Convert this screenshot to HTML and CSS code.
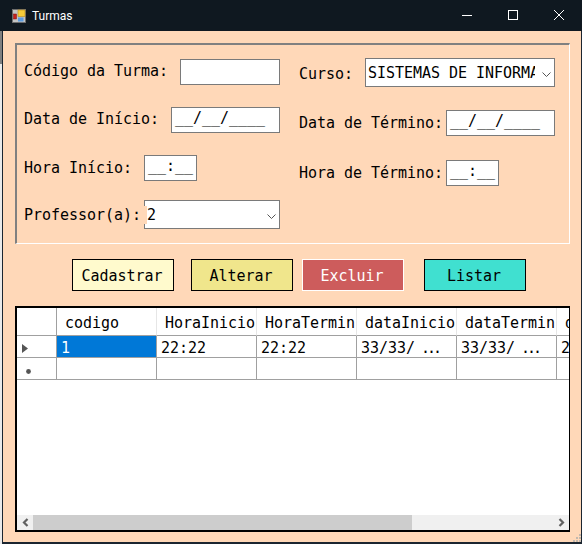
FILE: index.html
```html
<!DOCTYPE html>
<html>
<head>
  <title>Turmas</title>
  <link rel="stylesheet" href="styles.css">
</head>
<body>

  <div class="window">
    <div class="title-bar">
      <svg class="app-icon" width="14" height="14" viewBox="0 0 14 14">
        <rect x="0.5" y="0.5" width="13" height="13" fill="#c4c4c4" stroke="#6e6e6e"/>
        <rect x="1.5" y="5" width="3" height="5" fill="#c8201c" stroke="#7a1010" stroke-width="0.5"/>
        <rect x="6" y="1" width="7" height="6.5" fill="#f6cc3a" stroke="#b88a18" stroke-width="0.6"/>
        <rect x="6" y="8.5" width="5.5" height="4" fill="#5b9be0"/>
      </svg>
      <span class="title-text">Turmas</span>
      <div class="win-controls">
        <svg class="win-btn" width="10" height="10" viewBox="0 0 10 10"><path d="M0 5.5H10" stroke="#fff" fill="none"/></svg>
        <svg class="win-btn" width="10" height="10" viewBox="0 0 10 10"><rect x="0.5" y="0.5" width="9" height="9" stroke="#fff" fill="none"/></svg>
        <svg class="win-btn" width="10" height="10" viewBox="0 0 10 10"><path d="M0 0L10 10M10 0L0 10" stroke="#fff" fill="none"/></svg>
      </div>
    </div>

    <div class="content">
      <div class="panel">
        <div class="col col-left">
          <div class="field field-codigo">
            <label class="lift">Código da Turma:</label>
            <div class="input w-100"></div>
          </div>
          <div class="field field-inicio">
            <label class="lift">Data de Início:</label>
            <div class="input w-109">__/__/____</div>
          </div>
          <div class="field field-hora">
            <label>Hora Início:</label>
            <div class="input w-53">__:__</div>
          </div>
          <div class="field field-prof tight">
            <label class="prof-label">Professor(a):</label>
            <div class="select w-136">
              <span class="select-text">2</span>
              <svg class="chevron" width="9" height="5" viewBox="0 0 9 5"><path d="M0.5 0.5L4.5 4.5L8.5 0.5" stroke="#555" fill="none"/></svg>
            </div>
          </div>
        </div>
        <div class="col col-right">
          <div class="field field-curso">
            <label class="drop">Curso:</label>
            <div class="select w-190">
              <span class="select-text">SISTEMAS DE INFORMAÇÃO</span>
              <svg class="chevron" width="9" height="5" viewBox="0 0 9 5"><path d="M0.5 0.5L4.5 4.5L8.5 0.5" stroke="#555" fill="none"/></svg>
            </div>
          </div>
          <div class="field field-termino tight">
            <label>Data de Término:</label>
            <div class="input w-109">__/__/____</div>
          </div>
          <div class="field field-hora-t tight">
            <label>Hora de Término:</label>
            <div class="input w-53">__:__</div>
          </div>
        </div>
      </div>

      <div class="buttons">
        <button class="btn btn-cadastrar">Cadastrar</button>
        <button class="btn btn-alterar">Alterar</button>
        <button class="btn btn-excluir">Excluir</button>
        <button class="btn btn-listar">Listar</button>
      </div>

      <div class="grid">
        <div class="grid-body">
          <table>
            <colgroup>
              <col class="col-head">
              <col class="col-data"><col class="col-data"><col class="col-data"><col class="col-data"><col class="col-data"><col class="col-data">
            </colgroup>
            <thead>
              <tr>
                <th></th>
                <th>codigo</th>
                <th>HoraInicio</th>
                <th>HoraTermin</th>
                <th>dataInicio</th>
                <th>dataTermin</th>
                <th>d</th>
              </tr>
            </thead>
            <tbody>
              <tr class="row-one">
                <td class="row-head"><svg width="6" height="9" viewBox="0 0 6 9"><path d="M0 0L6 4.5L0 9Z" fill="#555"/></svg></td>
                <td class="selected">1</td>
                <td>22:22</td>
                <td>22:22</td>
                <td>33/33/<span class="dots"> ...</span></td>
                <td>33/33/<span class="dots"> ...</span></td>
                <td>2</td>
              </tr>
              <tr class="row-new">
                <td class="row-head"><svg class="star" width="5" height="5" viewBox="0 0 5 5"><circle cx="2.5" cy="2.5" r="2.4" fill="#555"/></svg></td>
                <td></td><td></td><td></td><td></td><td></td><td></td>
              </tr>
            </tbody>
          </table>
        </div>
        <div class="scrollbar">
          <div class="arrow"><svg width="7" height="9" viewBox="0 0 7 9"><path d="M5.5 1L2 4.5L5.5 8" stroke="#606060" stroke-width="2.2" fill="none"/></svg></div>
          <div class="thumb"></div>
          <div class="arrow arrow-right"><svg width="7" height="9" viewBox="0 0 7 9"><path d="M1.5 1L5 4.5L1.5 8" stroke="#606060" stroke-width="2.2" fill="none"/></svg></div>
        </div>
      </div>
    </div>

    <svg class="grip" width="8" height="8" viewBox="0 0 8 8">
      <path d="M6 0h2v2h-2zM3 3h2v2h-2zM6 3h2v2h-2zM0 6h2v2h-2zM3 6h2v2h-2zM6 6h2v2h-2z" fill="#c2b8ae"/>
    </svg>
  </div>

</body>
</html>
```

FILE: styles.css
```css
html, body {
  margin: 0;
  height: 100%;
}
body {
  overflow: hidden;
  background: linear-gradient(#808080 64px, #eaeaea 64px) no-repeat 0 0 / 2px 100%, #fff;
}
.window {
  width: 580px;
  height: 544px;
  margin-left: 2px;
  box-sizing: border-box;
  background: #ffd8b8;
  border: solid #1b2530;
  border-width: 0 1px 2px 1px;
  font-family: "DejaVu Sans Mono", monospace;
  font-size: 15px;
  letter-spacing: -0.03px;
  color: #000;
  display: flex;
  flex-direction: column;
  position: relative;
}
.title-bar {
  height: 31px;
  flex: none;
  margin: 0 -1px 0 -3px;
  background: #0f1820;
  color: #fff;
  display: flex;
  align-items: center;
  padding-left: 12px;
  font-family: Roboto, sans-serif;
  font-size: 12px;
  letter-spacing: 0;
}
.title-text {
  margin-left: 6px;
}
.win-controls {
  margin: 0 0 1px auto;
  display: flex;
  gap: 36px;
  padding-right: 18px;
}
.content {
  padding: 12px 0 0 12px;
}
.panel {
  width: 555px;
  height: 201px;
  box-sizing: border-box;
  border: 2px solid #808080;
  border-right: 1px solid #fff;
  border-bottom: 1px solid #fff;
  display: flex;
}
.col-left {
  width: 282px;
  padding: 14px 0 0 7px;
  box-sizing: border-box;
}
.col-right {
  flex: 1;
  padding: 13px 0 0 0;
}
.field {
  display: flex;
  align-items: center;
  gap: 12px;
  margin-bottom: 22px;
}
.field.tight {
  gap: 3px;
}
.field-hora {
  margin-bottom: 19px;
}
.field-curso {
  margin-bottom: 23px;
}
.field-termino {
  margin-bottom: 24px;
}
.lift {
  padding-bottom: 2px;
}
.drop {
  padding-top: 2px;
}
/* the label box sits over the left edge of the combo */
.prof-label {
  position: relative;
  z-index: 1;
  background: #ffd8b8;
  padding-right: 6px;
  margin-right: -6px;
}
.input, .select {
  box-sizing: border-box;
  background: #fff;
  border: 1px solid #7a7a7a;
  flex: none;
}
.input {
  height: 26px;
  line-height: 20px;
  padding-left: 3px;
  white-space: pre;
}
.select {
  height: 29px;
  line-height: 27px;
  padding: 2px 0 0 2px;
  display: flex;
  align-items: center;
  position: relative;
}
.select-text {
  display: block;
  overflow: hidden;
  white-space: nowrap;
  width: calc(100% - 19px);
}
.chevron {
  position: absolute;
  right: 3px;
  top: 13px;
}
.w-53 { width: 53px; }
.w-100 { width: 100px; }
.w-109 { width: 109px; }
.w-136 { width: 136px; }
.w-190 { width: 190px; }

.buttons {
  display: flex;
  padding: 15px 0 0 57px;
}
.btn {
  width: 102px;
  height: 32px;
  box-sizing: border-box;
  border: 1px solid #000;
  font-family: inherit;
  font-size: 15px;
  letter-spacing: inherit;
  padding: 2px 2px 0 0;
  color: #000;
}
.btn-cadastrar { background: #fffacd; }
.btn-alterar { background: #f0e68c; margin-left: 17px; }
.btn-excluir { background: #cd5c5c; margin-left: 9px; color: #fff; border-color: #fff; }
.btn-listar { background: #40e0d0; margin-left: 20px; }

.grid {
  margin-top: 15px;
  width: 555px;
  height: 226px;
  box-sizing: border-box;
  border: 2px solid #000;
  border-right-width: 1px;
  background: #fff;
  display: flex;
  flex-direction: column;
}
.grid-body {
  flex: 1;
  overflow: hidden;
}
table {
  border-collapse: separate;
  border-spacing: 0;
  table-layout: fixed;
  width: 640px;
}
.col-head { width: 40px; }
.col-data { width: 100px; }
th {
  height: 28px;
  box-sizing: border-box;
  padding: 2px 0 0 8px;
  text-align: left;
  font-weight: normal;
  white-space: nowrap;
  overflow: hidden;
  border-right: 1px solid #e6e6e6;
  border-bottom: 1px solid #a0a0a0;
}
th:first-child {
  border-right-color: #a0a0a0;
}
td {
  height: 22px;
  box-sizing: border-box;
  padding: 4px 0 0 4px;
  line-height: 17px;
  white-space: pre;
  overflow: hidden;
  border-right: 1px solid #a0a0a0;
  border-bottom: 1px solid #a0a0a0;
}
.dots {
  letter-spacing: -3px;
}
.row-head {
  padding: 3px 0 0 5px;
}
.row-head svg {
  display: block;
}
.star {
  margin: 2px 0 0 4px;
}
.selected {
  background: #0078d7;
  color: #fff;
}
.scrollbar {
  height: 15px;
  flex: none;
  background: #f0f0f0;
  display: flex;
}
.arrow {
  width: 16px;
  flex: none;
  display: flex;
  align-items: center;
  justify-content: center;
}
.thumb {
  width: 379px;
  background: #cdcdcd;
}
.arrow-right {
  margin-left: auto;
}
.grip {
  position: absolute;
  right: 0;
  bottom: 0;
}
```
